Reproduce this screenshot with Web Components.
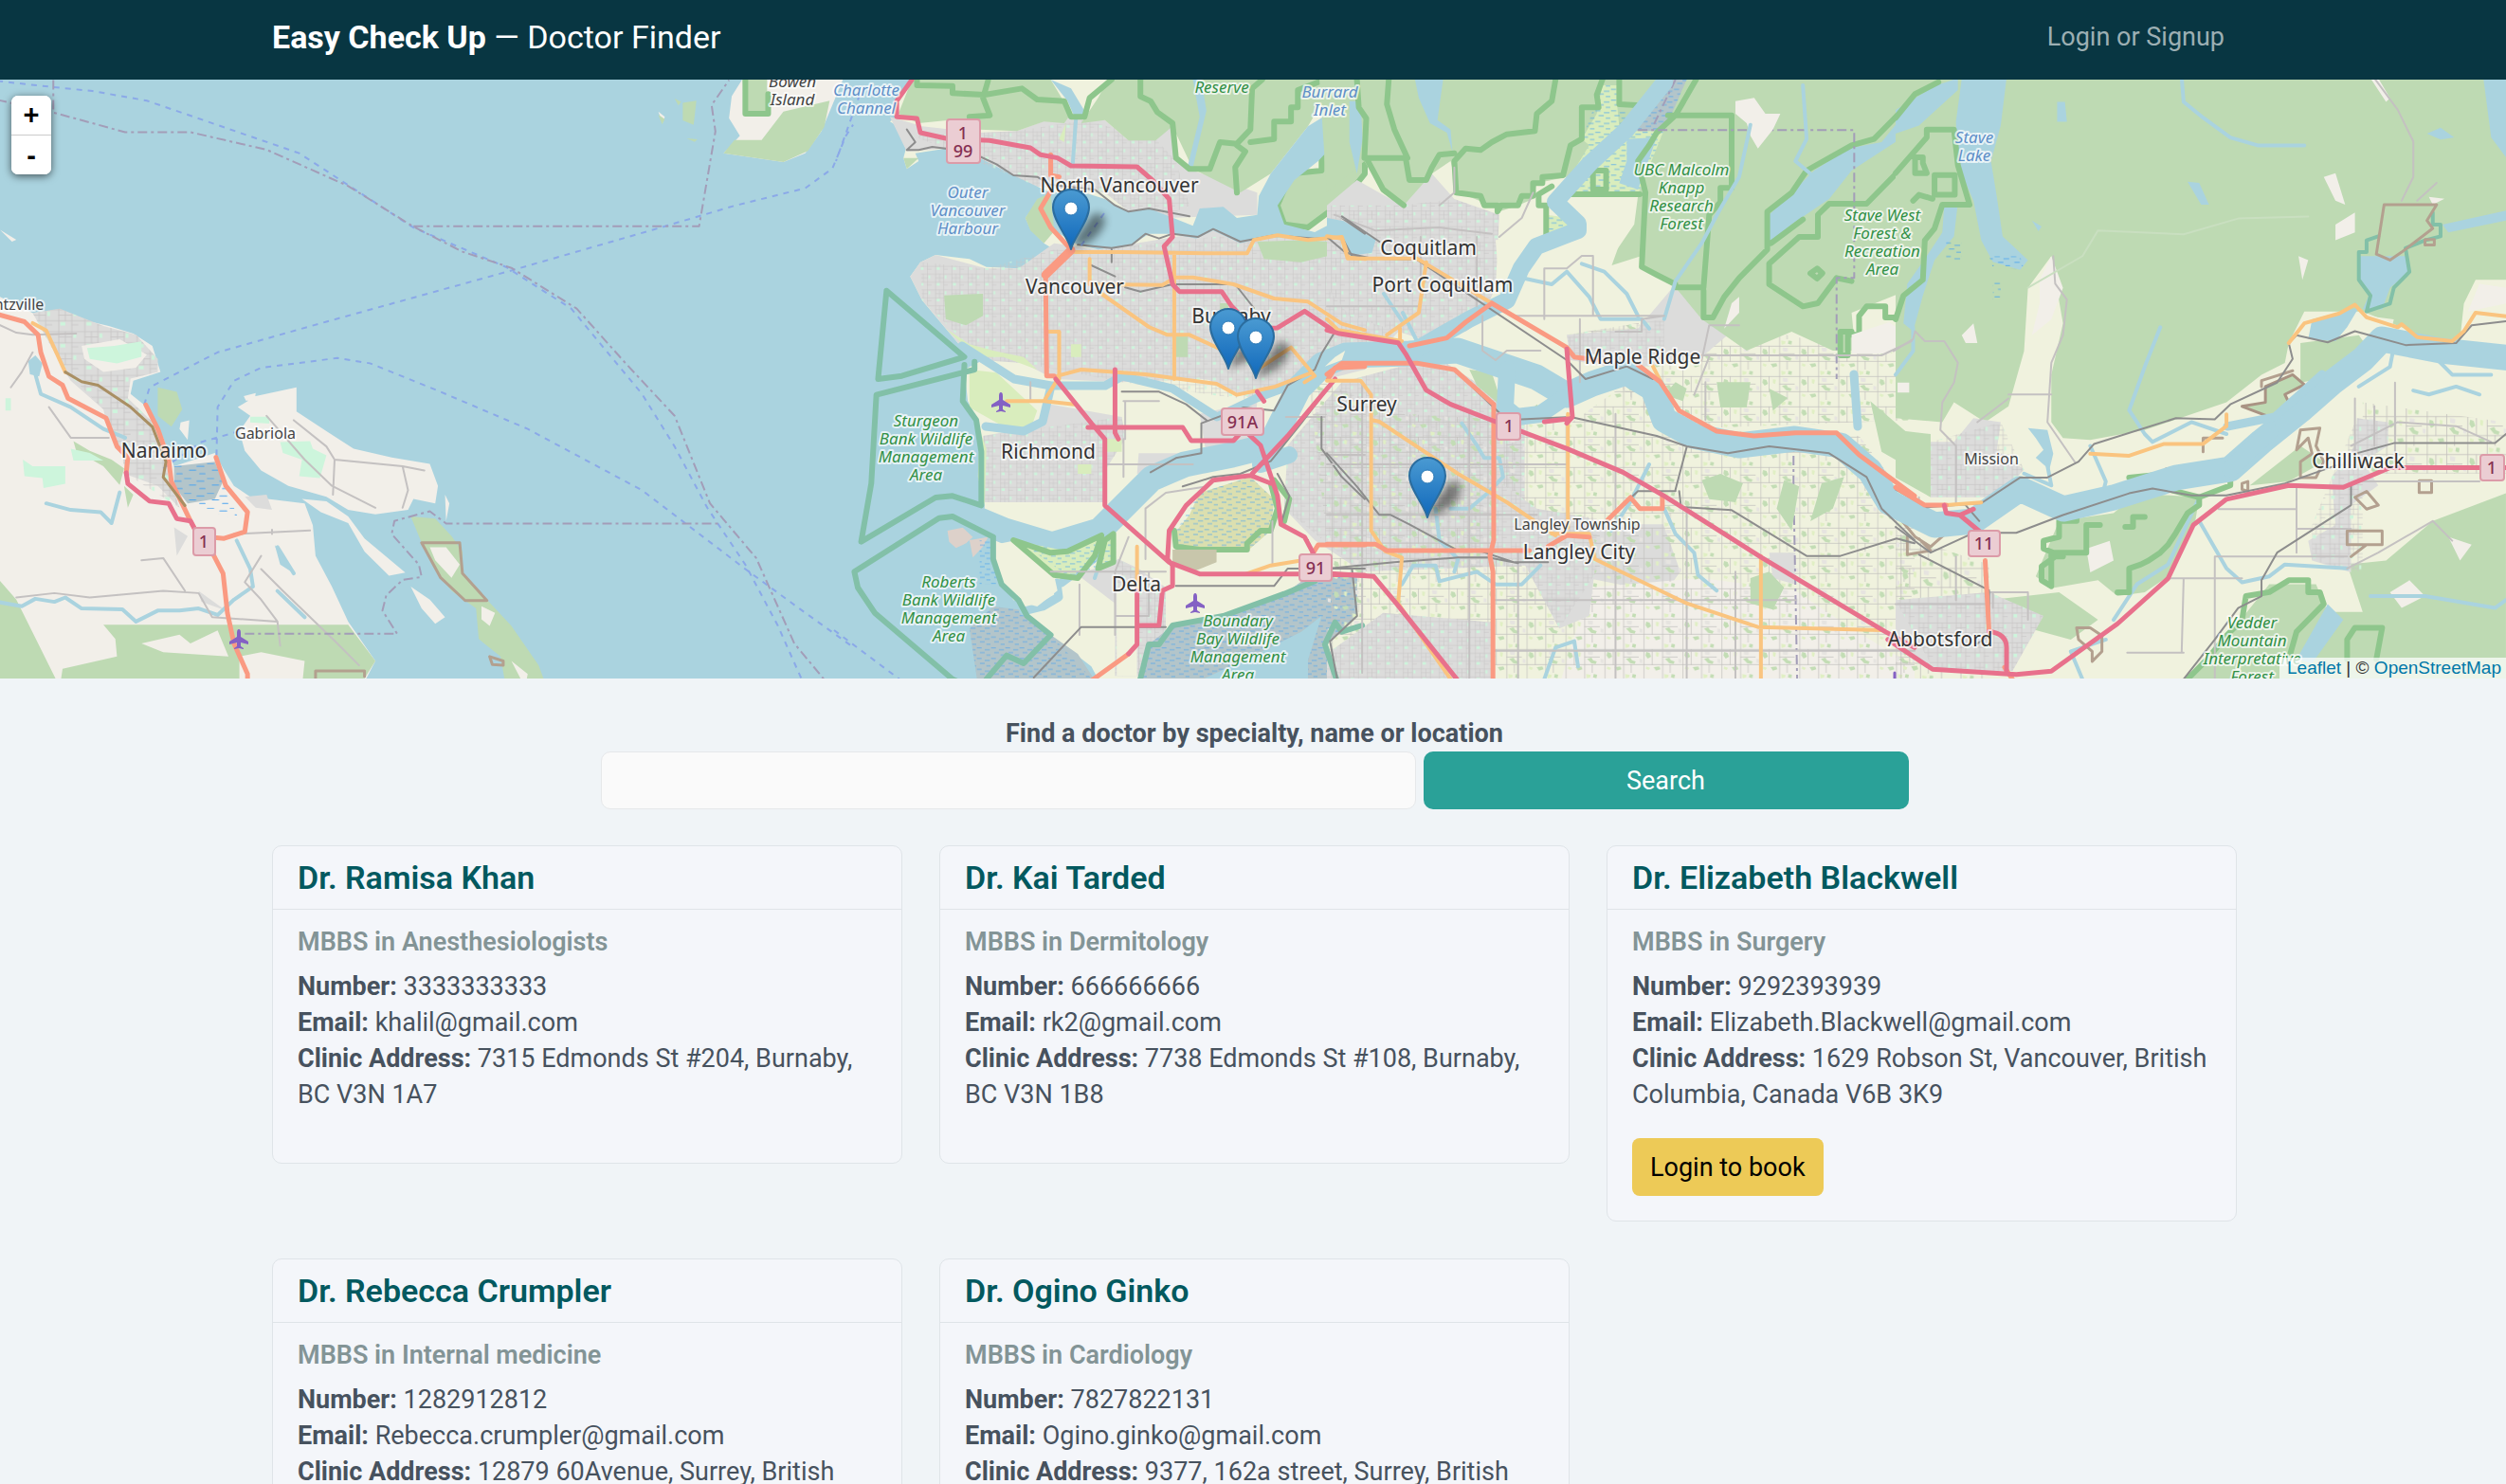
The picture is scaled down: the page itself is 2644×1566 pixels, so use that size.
<!DOCTYPE html>
<html lang="en">
<head>
<meta charset="utf-8">
<title>Easy Check Up — Doctor Finder</title>
<style>
html{overflow:hidden;background:#f0f4f7}
body{margin:0;width:calc(100% + 3px);font-family:Roboto,"Noto Sans",sans-serif;font-size:27px;line-height:38px;color:#47525e}
main{max-width:2073px;margin:0 auto}
</style>
</head>
<body>
<site-header><b slot="brand">Easy Check Up</b><span slot="tagline">— Doctor Finder</span><a slot="account" href="#login">Login or Signup</a></site-header>
<clinic-map></clinic-map>
<main>
<doctor-search></doctor-search>
<card-grid>
<doctor-card name="Dr. Ramisa Khan" specialty="MBBS in Anesthesiologists" number="3333333333" email="khalil@gmail.com">7315 Edmonds St #204, Burnaby, BC V3N 1A7</doctor-card>
<doctor-card name="Dr. Kai Tarded" specialty="MBBS in Dermitology" number="666666666" email="rk2@gmail.com">7738 Edmonds St #108, Burnaby, BC V3N 1B8</doctor-card>
<doctor-card name="Dr. Elizabeth Blackwell" specialty="MBBS in Surgery" number="9292393939" email="Elizabeth.Blackwell@gmail.com" bookable>1629 Robson St, Vancouver, British Columbia, Canada V6B 3K9</doctor-card>
<doctor-card name="Dr. Rebecca Crumpler" specialty="MBBS in Internal medicine" number="1282912812" email="Rebecca.crumpler@gmail.com">12879 60Avenue, Surrey, British</doctor-card>
<doctor-card name="Dr. Ogino Ginko" specialty="MBBS in Cardiology" number="7827822131" email="Ogino.ginko@gmail.com">9377, 162a street, Surrey, British</doctor-card>
</card-grid>
</main>

<template id="t-header">
<style>
:host{display:block;background:#083642;color:#fff}
nav{max-width:2073px;height:78px;padding-bottom:6px;margin:0 auto;display:flex;align-items:center;justify-content:space-between}
.brand{font-size:34px;line-height:40px}
::slotted(b){font-weight:700}
.account{padding-right:13px}
::slotted(a){color:#9cafb3;text-decoration:none}
</style>
<nav><div class="brand"><slot name="brand"></slot> <slot name="tagline"></slot></div><div class="account"><slot name="account"></slot></div></nav>
</template>

<template id="t-search">
<style>
:host{display:block;max-width:1380px;margin:0 auto;padding:39px 0 38px}
form{display:grid;grid-template-columns:860fr 512fr;column-gap:8px}
label{grid-column:1/-1;text-align:center;font-weight:700}
input,button{height:61px;box-sizing:border-box;border-radius:10px;font:inherit;width:100%}
input{border:1px solid #e6e8ea;background:#fafafa;padding:0 20px;outline:0}
button{border:0;background:#2aa198;color:#fff}
</style>
<form><label for="q">Find a doctor by specialty, name or location</label><input id="q" type="text"><button type="button">Search</button></form>
</template>

<template id="t-grid">
<style>:host{display:grid;grid-template-columns:repeat(3,1fr);gap:39px;align-items:start}</style><slot></slot>
</template>

<template id="t-card">
<style>
:host{display:block;border:1px solid #dfe4e8;border-radius:10px;background:#f4f6fa}
h2{margin:0;padding:13px 26px;font-size:34px;line-height:40px;font-weight:600;color:#03595f;border-bottom:1px solid #dfe4e8}
.body{padding:19px 26px 0}
h3{margin:0 0 12px;font-size:27px;line-height:31px;font-weight:600;color:#839496}
p{margin:0 0 27px}
b{font-weight:700}
.foot{padding-bottom:26px}
button{display:block;font:inherit;color:#000;background:#edca57;border:0;border-radius:8px;height:61px;padding:0 19px}
</style>
<h2></h2><div class="body"><h3></h3><p><b>Number:</b> <span class="n"></span><br><b>Email:</b> <span class="e"></span><br><b>Clinic Address:</b> <slot></slot></p><div class="foot"></div></div>
</template>

<template id="t-map">
<style>
:host{display:block;position:relative;height:632px;overflow:hidden;background:#aad3df}
svg{display:block;width:100%;height:100%}
.zoom{position:absolute;left:12px;top:17px;width:42px;border-radius:7px;background:#fff;box-shadow:0 2px 9px #0009;display:flex;flex-direction:column;overflow:hidden}
.zoom button{border:0;background:#fff;height:41px;padding:0;font:700 29px/41px "Liberation Sans",sans-serif;color:#000}
.zoom button+button{border-top:1px solid #ccc;height:42px;line-height:36px}
.credit{position:absolute;right:0;bottom:0;background:#ffffffb8;padding:0 8px;font:19px/22px "Liberation Sans",Arial,sans-serif;color:#333;white-space:nowrap}
.credit a{color:#0078a8;text-decoration:none}
path{vector-effect:non-scaling-stroke;fill:none;stroke-linejoin:round;stroke-linecap:round}
.land{fill:#f2efe9}.farm{fill:#f0f2de}.wood{fill:#bedab3}.town{fill:#dcdcdb}.water{fill:#aad3df}.mud{fill:#b3c5ca}.bog{fill:#dbdfaf}.meadow{fill:#d9edbd}.mint{fill:#cdf5dc}
.grid{fill:url(#streets)}.lots{fill:url(#lots)}.wet{fill:url(#dashes)}
.park{stroke:#8ec68c;stroke-width:6}.sea{stroke:#82c0a8;stroke-width:6}.res{stroke:#b3a08f;stroke-width:3}
.river{stroke:#aad3df}.w26{stroke-width:27}.w18{stroke-width:18}.w9{stroke-width:9}.w4{stroke-width:4}
.m{stroke:#e8718c;stroke-width:5}.t{stroke:#fa9a82;stroke-width:5}.p{stroke:#fac47f;stroke-width:4}.rail{stroke:#8d8d8d;stroke-width:2}.s{stroke:#c4c1c1;stroke-width:2}
.ferry{stroke:#8ba9e8;stroke-width:2;stroke-dasharray:6 6;stroke-linecap:butt}.border{stroke:#a39db8;stroke-width:2;stroke-dasharray:10 4 3 4;stroke-linecap:butt}
text{font-family:"Noto Sans",sans-serif;text-anchor:middle;paint-order:stroke;stroke:#ffffffb0;stroke-width:4px;stroke-linejoin:round}
.city{font-size:21px;fill:#333}.small{font-size:16px;fill:#444}.nat{font-size:17px;font-style:italic;fill:#329046}.sea-name{font-size:17px;font-style:italic;fill:#5f8fc8}.dark{font-size:17px;font-style:italic;fill:#444}
.shield rect{fill:#ebcdd3;stroke:#dc9ba8;stroke-width:2}.shield text{font-size:18px;fill:#863052;stroke:none;font-weight:500}
.plane{fill:#8461c4;stroke:none}
</style>
<svg viewBox="0 84 2647 632" preserveAspectRatio="xMinYMid slice" role="img" aria-label="Map of clinics around Vancouver">
<defs>
<pattern id="streets" width="48" height="50" patternUnits="userSpaceOnUse"><path d="M0,8H48M0,33H48M12,0V50M36,0V50M24,8V33M12,20H36M36,42H48" stroke="#c6c4c4" stroke-width="1.5"/><path d="M15,36h9v8h-9zM39,12h5v10h-5z" class="mint"/></pattern>
<pattern id="lots" width="104" height="96" patternUnits="userSpaceOnUse"><path d="M14,0V96M64,0V96M0,22H104M0,70H104M36,22V70M84,70V96M64,46H104" stroke="#c2c0bc" stroke-width="2"/><path d="M20,30l9,3 4,12 -9,6 -6,-10zM70,52l12,-4 4,8 10,4 -3,8 -12,-3 -4,-5zM40,78l15,-2 3,9 -12,4zM88,4l9,2 -2,11 -9,-3z" fill="#c3ddb5" style="fill:#c3ddb5"/><path d="M68,4l12,3 -2,8 -9,2zM20,76l10,4 -3,7 -8,-3zM46,30l8,2 -2,14 -6,-3z" style="fill:#e0efc4"/><path d="M72,26l14,2 -1,12 -12,-2zM2,52l8,1v12l-8,-1z" style="fill:#e6e4e0"/></pattern>
<pattern id="dashes" width="42" height="34" patternUnits="userSpaceOnUse"><path d="M3,5H15M26,11H39M12,20H24M31,28H41" stroke="#4aa3ef" stroke-width="2"/></pattern>
<linearGradient id="pinfill" x1="0" y1="0" x2="0" y2="1"><stop offset="0" stop-color="#4a9ad2"/><stop offset="1" stop-color="#1068bb"/></linearGradient>
<filter id="soft" x="-50%" y="-50%" width="200%" height="200%"><feGaussianBlur stdDeviation="4"/></filter>
<g id="pin"><path d="M0,0L6,-14 22,-36Q33,-42 36,-30 34,-18 20,-8Z" style="fill:#000" opacity=".45" filter="url(#soft)"/><path d="M0,0C-3,-13 -19,-30 -19,-44A19,19 0 0 1 19,-44C19,-30 3,-13 0,0Z" style="fill:url(#pinfill);stroke:#2b6d9f;stroke-width:2"/><circle cy="-43" r="7" fill="#fff" stroke="#2c79b5"/></g>
<path id="plane" class="plane" d="M0,-10Q2,-10 2,-6V-2L10,3V6L2,4V8L5,10V11L0,10 -5,11V10L-2,8V4L-10,6V3L-2,-2V-6Q-2,-10 0,-10Z"/>
</defs>

<!-- Vancouver Island and the Gulf Islands -->
<g transform="scale(.574 .4619)">
<path class="land" d="M-5,675L20,690 60,715 110,708 150,730 200,745 245,762 280,790 295,850 245,870 240,900 265,925 285,960 300,1000 320,1065 395,1035 410,1070 430,1110 460,1135 560,1150 575,1200 580,1270 610,1340 640,1420 690,1510 665,1570 -5,1570Z"/>
<path class="wood" d="M-5,1320L30,1370 110,1570 -5,1570ZM190,1427H640L690,1510 660,1570H110L115,1528 215,1500 212,1460ZM290,885L325,895 335,935 315,975 290,950ZM135,1008L165,1030 205,1050 228,1070 220,1108 190,1065 140,1030ZM228,1110L245,1130 235,1160Z"/>
<path class="land" d="M440,1500L480,1490 560,1510 555,1570H440ZM260,1470L330,1450 350,1470 400,1440 420,1500 300,1490Z"/>
<path class="town" d="M60,715L110,705 190,745 250,765 290,820 290,850 240,865 235,910 285,970 300,1010 310,1090 330,1160 290,1110 235,1085 225,1040 195,960 190,935 130,870 115,840 85,770ZM450,1135L490,1130 500,1165 470,1160ZM320,1205L345,1225 325,1270ZM365,1350L415,1395 370,1375Z"/>
<path class="grid" d="M60,715L110,705 190,745 250,765 290,820 290,850 240,865 235,910 285,970 310,1090 330,1160 235,1085 190,935 115,840Z"/>
<path class="land" d="M150,790L220,775 270,810 250,840 190,850 155,820Z"/>
<path class="mint" d="M160,795L210,790 260,780 260,815 215,830 165,820ZM42,1050L60,1065 120,1065 120,1105 80,1115 78,1092 45,1088ZM130,1025L165,1035 190,1052 135,1052ZM10,910h10v28h-10z"/>
<path class="land" d="M437,930L470,905 545,885 545,940 600,985 650,1025 720,1045 790,1060 805,1110 800,1150 760,1140 750,1165 690,1175 640,1165 600,1135 530,1110 480,1075 450,1030 440,985 460,950ZM555,1140L600,1145 640,1180 670,1230 745,1308 715,1315 670,1260 640,1195 590,1170ZM755,1340L790,1370 818,1410 800,1425 775,1390ZM448,905L470,898 468,915 452,915ZM332,965L348,960 345,1005 330,980ZM818,1130L826,1150 820,1190ZM0,525L30,548 22,552ZM1210,255l12,12 -4,14z"/>
<path class="mint" d="M515,1010L570,1008 575,1025 600,1040 588,1092 550,1088 555,1050 520,1035ZM460,952L495,952 495,968 460,965Z"/>
<path class="mud" d="M320,1065L395,1055 410,1100 395,1140 345,1150 320,1110Z"/><path class="wet" d="M320,1065L395,1055 410,1100 440,1190 345,1150 320,1110Z"/>
<path class="wood" d="M755,1180L800,1185 830,1225 850,1260 850,1310 895,1370 940,1430 990,1520 1005,1570 930,1570 920,1500 880,1460 875,1390 830,1350 800,1300 775,1240ZM1255,235L1280,230 1275,285 1255,275ZM1240,225l12,8 -5,8zM1210,262l12,10 -5,12zM1262,316l20,2 -5,6z"/>
<path class="res" d="M775,1240H845L850,1310 895,1372H855L810,1320ZM900,1500L925,1510 925,1520 905,1518ZM580,1570V1533H670V1545"/>
<path class="land" d="M790,1250L820,1250 845,1290 830,1320 800,1280ZM885,1385L910,1400 900,1430 885,1415ZM940,1510L970,1540 965,1570Z"/>
<path class="land" d="M1365,180L1550,180 1530,240 1510,300 1480,350 1440,370 1330,350 1360,310 1340,270 1345,220Z"/><path class="wood" d="M1365,180H1410V262H1370ZM1440,255L1525,230 1515,290 1485,345 1440,370 1330,350 1350,320 1400,320Z"/><path class="park" d="M1370,180V260H1412V215"/>
<path class="river w4" d="M-5,1375L40,1385 65,1368 100,1375 120,1365 150,1390 225,1392 250,1420 290,1395 330,1395 365,1390 400,1405 430,1370 465,1340 460,1300 435,1235M65,855L75,900 130,930 190,980 230,1000M85,1150L130,1165 185,1170 205,1195 220,1125M510,1250L540,1310M510,1350L560,1410"/><path class="water" d="M52,825L65,812 78,830 72,860 55,855ZM505,1245L530,1290 540,1310 515,1290Z"/>
<path class="s" d="M-5,740L30,760 60,765 140,762M20,885L40,850 60,805M90,930L130,1000 200,1000M30,1365L100,1355 165,1365 300,1350 365,1355 390,1410 510,1420M480,1270L450,1330 480,1370 510,1420 515,1475M500,1220V1210M430,1220L570,1212M540,960L600,1020 615,1050 740,1065 780,1075M615,1050L612,1130M740,1065L750,1120 740,1160M490,950L560,1050 610,1110 690,1160M260,1280L300,1275 340,1350M480,1300L520,1350 620,1470 660,1520"/>
<path class="ferry" d="M-5,185L90,198 170,208 270,230 550,350 760,520 930,610 1050,705 1180,900 1240,1020 1300,1160 1370,1290 1430,1430 1480,1570M265,925L275,885 400,805 600,735 940,618 1200,525 1350,470 1480,430 1530,385 1555,310 1568,285M398,1040L400,930 430,870 480,840 620,818 680,830 800,890 970,980 1180,1120 1370,1300 1480,1400 1570,1480M300,1070L370,1010 440,985"/>
<path class="border" d="M-5,228L30,238M98,183V257L230,302H350L490,342 640,425 760,518 850,575 940,612 1060,705 1150,830 1240,950 1305,1150 1390,1275 1460,1470 1540,1590M760,517H1285L1315,300 1308,240 1340,183M450,1448H730L703,1395 710,1360 740,1325 775,1318 770,1290 720,1220 725,1190 790,1168 820,1196H1325"/>
<path class="p" d="M60,738L85,755 120,850"/><path class="t" d="M-5,718L45,735 70,765 75,805 90,860 115,880 125,910 195,955 215,1020 235,1045 232,1080M268,925L290,980 310,1050 315,1100 350,1190 365,1225 412,1230 450,1215 455,1170 415,1110 397,1045M385,1250L410,1310 418,1400 430,1470 455,1540 455,1570"/>
<path class="m" d="M232,1080L235,1105 275,1145 310,1150 325,1185 350,1190 365,1225"/><path d="M120,850L150,872 180,880 240,930 280,975 305,1055 300,1090 340,1155" stroke="#a98f63" stroke-width="3"/>
</g>

<!-- Mainland base and urban areas -->
<g transform="translate(880 70) scale(.35714 .33333)">
<path class="farm" d="M230,42L190,100 185,160 165,175 205,200 215,250 205,290 215,325 250,300 240,275 330,260 430,290 480,310 530,345 600,350 600,380 640,400 600,430 565,480 580,515 620,560 650,580 625,620 545,640 450,635 400,610 300,597 255,620 225,665 260,740 330,830 385,900 440,930 385,960 395,1060 420,1110 440,1210 445,1400 320,1372 360,1385 430,1410 470,1510 470,1560 495,1640 545,1690 570,1740 640,1800 700,1850 760,1900 790,1960H5000V42Z"/>
<path class="town" d="M165,160L260,190 430,210 540,205 680,150 740,170 800,170 870,235 1000,190 1010,300 1060,330 1250,400 1250,470 990,480 870,460 800,400 600,380 530,345 430,290 330,260 215,270ZM225,665L255,620 300,597 450,640 545,640 650,560 780,580 1120,520 1500,540 1568,480 1780,490 1880,720 1700,800 1568,960 1420,1000 1250,1060 1100,990 850,1000 650,990 560,940 440,930 385,900 260,740Z"/>
<path class="grid" d="M230,220L540,205 740,170 950,230 1010,300 1050,440 990,470 870,460 800,400 600,380 330,260ZM260,740L255,620 450,640 650,580 780,580 1120,540 1568,520 1780,490 1820,750 1568,900 1250,1060 850,1000 560,940 440,930Z"/>
<path class="town" d="M440,1170L600,1140 640,1070 850,1110 860,1180 800,1280V1380H445ZM900,1225H1060L1100,1280 1000,1290 940,1280 895,1290ZM1080,1100L1250,1060 1240,1190 1100,1230ZM840,1560L900,1590 980,1650V1930H830V1700L720,1610Z"/><path class="grid" d="M440,1170L850,1110 860,1180 800,1280V1380H445ZM840,1560L980,1650V1930H830Z"/>
<path class="farm" d="M850,1040L960,1030 1040,1070 1085,1130V1220H870ZM835,1660H895V1930H835Z"/>
<path class="town" d="M1340,1200L1500,1000 1780,920 2040,1100V1450L2450,1450 2500,1600 2380,1780 2320,1640 2040,1580 1560,1600 1420,1500 1330,1400Z"/><path class="grid" d="M1330,1400L1340,1200 1500,1000 1780,920 2040,1100V1580L1560,1600Z"/>
<path class="wood" d="M230,42H640L700,150 680,180 620,175 540,205 430,200 340,170 250,180 190,150ZM730,180L780,100 810,42H1480L1400,190 1290,340 1200,400 1060,325 1000,190 950,235 870,235 800,170ZM1250,555L1400,550 1510,560 1500,590 1380,620 1270,610ZM325,725L440,720V790L390,820 330,800ZM565,480L600,420 640,400 660,510 620,560 580,520ZM205,290L250,290 215,325ZM1010,850h35v70h-35zM1140,750h25v25h-25z"/>
<path class="wood park" d="M1450,42L1530,42 1568,60V340L1500,430 1400,510 1330,500 1310,440 1350,340 1440,330V240L1460,180Z"/>
<path class="water" d="M640,400L740,400 800,420 870,460 930,450 990,475 1060,505 1080,450 1150,445 1190,480 1250,470 1255,410 1290,340 1400,190 1460,150 1540,42H1568L1500,220 1430,300 1360,360 1310,440 1330,500 1420,525 1500,480 1568,490 1670,520 1740,560 1650,600 1550,560 1520,540 1430,550 1350,540 1260,545 1200,560 1120,520 1070,545 1000,530 930,530 880,565 780,580 720,565 650,520ZM640,42L700,70 745,150 735,165 710,160 690,110ZM1060,42H1085L1100,140 1060,320 1045,315 1080,160Z"/>
<path class="river w4" d="M715,160L705,310M1540,42L1568,160"/>
<path class="park" d="M245,42V60L350,62V85L445,90 555,70 600,105 680,110 700,160H740L755,100 820,42M455,45L440,100 460,155 400,160M905,42V95L935,110 955,145 1000,180 1010,290 1050,325 1110,325 1140,240 1190,245 1230,200 1235,70 1265,42M1190,250L1215,270 1185,320 1190,400M1230,240L1300,230V175H1350V130H1370V75L1450,42"/>
<path class="meadow" d="M400,960L480,970 600,1090 580,1150 500,1140 400,1080ZM430,1150L450,1210 445,1390 425,1300ZM330,830L400,880 470,900 560,920 600,960 500,920 420,920ZM665,230L685,180 680,240Z"/>
<path class="farm" d="M565,1400L745,1385V1490L600,1510Z"/>
<path class="meadow" d="M720,1260h40v30h-40zM800,1180h50v40h-50zM700,880h30v40h-30z"/>
<path class="bog" d="M1080,1350L1230,1300 1300,1370 1290,1470 1220,1535H1010L1005,1480 1050,1420Z"/><path class="wet" d="M1080,1350L1230,1300 1300,1370 1290,1470 1220,1535H1010L1005,1480Z"/>
<path class="park" d="M1005,1470L1010,1520 1080,1530 1220,1530V1510L1260,1470H1290L1310,1400 1290,1320M1300,1310L1345,1370 1330,1440"/>
<path d="M1000,1530H1130V1570L1060,1600 1000,1575Z" style="fill:#c8c6ab"/>
<path d="M335,1470L380,1460 410,1490 390,1510 360,1525 340,1505ZM400,1500L455,1490 440,1520 410,1555Z" style="fill:#ddd1ca"/>
<path class="mud" d="M400,1780L470,1710 545,1720 570,1745 640,1800 720,1860 780,1960H425ZM900,1960L930,1830 1000,1770 1150,1740 1330,1670 1420,1600 1545,1610V1740L1450,1830 1490,1960Z"/><path class="wet" d="M400,1780L470,1710 545,1720 640,1800 780,1960H425ZM430,1500L470,1500 490,1640 430,1640ZM900,1960L930,1830 1000,1770 1150,1740 1330,1670 1420,1600 1545,1610V1740L1450,1830 1490,1960Z"/>
<path class="water" d="M1050,1960L1250,1860 1380,1790 1440,1740 1400,1880 1400,1960Z"/>
</g>

<!-- Valley forests -->
<g transform="translate(1400 70) scale(.3954 .33333)">
<path class="land" d="M700,1650L1000,1620 1250,1660 1400,1780 1568,1900V1960H620Z"/>
<path class="lots" d="M-50,980L200,1100 650,1130 850,960 1000,1150 1420,1170 1568,1400 1568,1960H150L0,1840 0,1500Z"/><path class="lots" d="M640,850L1000,780 1150,830 1420,900 1568,850V1120L900,1150Z"/>
<path class="town" d="M340,420L460,470 450,700 400,830 270,870 60,790 0,700V440L80,360 200,440 280,340ZM640,850L830,830 930,690 1000,800 1100,820 1000,920 800,960 650,930ZM440,1300L560,1400 700,1430 720,1540 700,1740 620,1780 520,1560 440,1560ZM1180,1540H1250V1640L1190,1620Z"/><path class="grid" d="M340,420L460,470 450,700 400,830 270,870 60,790 0,700V440L200,440ZM640,850L900,800 900,930 650,930ZM440,1300L560,1400 720,1430V1600L620,1780 520,1560 440,1560Z"/><path class="town" d="M0,1940V1860L150,1730 440,1760V1950H0Z"/><path class="grid" d="M0,1940V1860L150,1730 440,1760V1950H0Z"/>
<path class="wood" d="M-20,42H1700V700H1568L1400,780 1410,900 1350,900 1240,840 1120,900 1000,800 930,700 840,640V600L760,630 830,400 630,400 640,350 560,370 550,420 510,440 460,460 440,440 350,400 330,300 280,340 205,440 150,400 100,300 0,400Z"/>
<path class="farm" d="M450,550L590,540 620,410H830L820,500 740,640 700,700 460,690ZM370,840L440,780 620,900 560,940 420,930Z"/>
<path class="meadow" d="M735,60H775V130L780,190 900,200 830,405H620L700,250 680,230 720,150ZM585,470L650,480 660,520 585,545Z"/><path class="wet" d="M735,60H775V130L900,200 830,405H620L700,250 680,230ZM585,470L650,480 660,520 585,545Z"/>
<path class="mud" d="M890,42H960L900,205H820Z"/><path class="wet" d="M890,42H960L900,205H820Z"/>
<path class="water" d="M1568,110L1480,240 1390,260 1300,330 1180,470 1175,570 1240,500 1340,420 1400,330 1568,200ZM235,42H310L295,170 330,200 335,270 320,210 275,180 245,100ZM60,110H90L95,230 80,340 60,240ZM0,480L45,490 130,550 120,590 60,600 30,540 0,545ZM800,230L880,225 830,390 780,370 800,300Z"/>
<path class="park" d="M80,42L85,130 105,165 100,290H210L220,360H265L280,320 300,280 340,275M165,42L160,120 180,200 215,290M610,42L600,110 560,150 555,205 480,215 440,240 410,265 370,260 340,300 345,400 410,410 420,440H455V460L465,440H510L520,410H550V370H575V350L630,345 650,250 680,230V130H725L720,90 735,42M780,42V120L860,125 890,42M105,290L150,390 205,440M910,155H1080V385H1050V430L1020,470 1005,700H930L930,690 880,660 840,635 850,400 830,300 860,250 880,210 930,155 985,42M620,405H835M600,380L565,405V440L585,440V545L660,530M1005,710V795H1030L1060,730 1100,670 1175,580 1175,460 1240,400 1280,330 1400,250 1460,230 1568,100M1185,560L1270,485M1568,280L1440,435H1340L1310,470V540H1260L1180,625V690L1270,760 1310,750 1360,670 1400,680M1290,655L1308,640 1322,655 1308,672ZM1520,795H1490V760H1440L1420,790V850H1390V915H1370V840L1400,840M710,330h35v60h-35z"/>
<path class="border" d="M830,202H1407V670H1360V990M930,42L870,190M1245,1170V1330L1255,1960"/>
<path class="land" d="M1090,110L1140,100 1170,150 1210,150 1190,200 1150,260 1130,220 1120,180 1090,150ZM1400,850L1500,810 1560,860 1500,910 1400,910ZM1080,750L1100,730 1100,780 1060,830Z"/>
<path class="river w4" d="M1130,185L1100,350 1050,450 1000,560 930,680 900,800M520,670L600,690 640,650 700,730 730,800 840,800 860,830M680,625L740,650 800,720 830,790M1270,60L1280,230 1250,300 1290,340M360,1130L400,1200 420,1240H460L470,1300 430,1350 380,1400 330,1400M290,1400L300,1500 350,1560 340,1600M200,1640L230,1580 290,1580 300,1630 400,1600 450,1640 520,1640 570,1580M900,1400L930,1480 980,1540 990,1610 1040,1660M580,1940L610,1840 660,1820 670,1900"/>
<path class="wood" d="M480,1160L520,1090 560,1100 600,1120 560,1070ZM1130,1620L1180,1600 1220,1650 1190,1720 1130,1700ZM1220,1310L1260,1330 1240,1470 1200,1400ZM380,960L440,970 470,1080 400,1010ZM880,1080L990,1180 940,1190 880,1140ZM1040,1000L1130,1000 1120,1080 1050,1080ZM1450,1060L1568,1180V1280L1480,1220ZM1000,1310L1050,1290 1110,1320 1090,1380 1020,1370ZM1320,1320L1380,1300 1350,1400 1290,1440ZM900,1040L930,1000 960,1020 950,1060ZM1180,1020L1230,1050 1190,1090Z"/>
</g>

<!-- Stave Lake, Mission and Chilliwack -->
<g transform="translate(2000 70) scale(.41068 .4172)">
<path class="lots" d="M0,1180L240,1260 240,1560H0ZM1200,850L1568,900V1030H1200Z"/>
<path class="wood" d="M0,30H1700V540H1490L1460,600 1450,690 1380,700 1300,660 1200,620 1050,620 1010,700 1000,750 940,780 850,850 640,920 500,945 430,940 400,900 400,780 430,650 400,480 340,560 330,720 290,860 230,900 150,850 120,900 0,890Z"/>
<path class="wood" d="M0,920L90,930 90,1090 0,1040ZM420,1150L560,1130 620,1080 780,1090 770,1150 700,1290 640,1330 570,1340 520,1300 400,1320 360,1290ZM1160,1260L1260,1250 1380,1150 1568,1080V1500L1620,1560H960L740,1560 870,1420 960,1310 1080,1310 1110,1380 1200,1380ZM910,1060L1040,960 1100,1000 1010,1050ZM240,1350L420,1330 520,1400 450,1450 300,1410ZM1040,700L1190,680 1220,720 1150,780 1040,800Z"/>
<path class="wood park" d="M950,810L1020,780 1050,805 1000,830 1020,870 970,890 890,860 950,850Z" style="stroke:#a99383;stroke-width:3"/>
<path class="farm" d="M1155,655L1200,630 1280,640 1270,680 1190,670ZM300,1250L360,1220 360,1330 300,1320Z"/>
<path class="town" d="M90,950L150,950 200,890 270,900 260,970 330,1020 260,1090 90,1090ZM1185,890L1265,900V960L1200,1000 1240,1060 1170,1110V1280L1070,1250 1060,1200 1130,1160 1120,1040 1180,960ZM0,1350L240,1330 380,1390 300,1530H100L0,1450Z"/><path class="grid" d="M90,950L270,900 330,1020 260,1090H90ZM1185,890L1265,900V960L1200,1000V1280L1070,1250V1160L1120,1040ZM0,1350L240,1330 380,1390 300,1530H100Z"/>
<path class="land" d="M170,680L200,650 210,700 180,700ZM370,540L400,480 430,560 400,640 350,680 370,600ZM1100,280L1130,270 1155,350 1130,340ZM1220,30H1240L1270,80 1260,90ZM1130,400L1180,370 1180,420 1130,440ZM5,800h30v25H5zM1500,550L1568,560V600L1470,620ZM1270,1330L1320,1300 1360,1340 1300,1370ZM1420,1190L1480,1210 1450,1250ZM1035,480L1060,490 1045,540ZM490,1220L550,1200 560,1250 500,1280ZM1370,330L1410,335 1380,350Z"/>
<path class="water" d="M170,30H285L270,150 245,240 260,330 275,430 340,490 320,515 250,495 220,440 200,340 160,250 155,140ZM125,350L160,345 150,430 100,490 70,580 45,670 20,650 30,550 80,480 120,420ZM415,90H435L440,140 415,140ZM750,292L780,295 805,350 785,350ZM1510,30H1568V230L1530,180ZM1190,480L1310,480 1320,520 1270,560 1250,615H1200L1220,570 1190,540ZM1070,640L1190,610 1160,660 1130,695 1060,690ZM1405,400L1568,365V390L1420,420ZM340,915L390,920 405,980 395,1020 360,990 380,970 360,940ZM0,110L100,50 160,30V60L60,150 0,170ZM1110,1360L1150,1400 1070,1510 1030,1500ZM350,390l25,15 -8,12zM1365,170L1400,155 1435,180 1400,185Z"/>
<path class="river w4" d="M735,30L740,90 790,130 860,180 930,200 1050,200M680,660L640,760 600,870 640,930 660,950 760,900 850,930M500,960L540,1050 530,1090M780,1150L850,1270 890,1305 960,1290 1000,1260 1160,1270M1220,1340L1360,1340 1540,1370 1568,1350M780,1090L700,1260 620,1310 560,1400M540,1450L450,1480 480,1550M1280,710L1270,760 1190,810M1330,820L1370,830 1440,810 1500,830M1390,740L1430,780 1530,780M390,1010L400,1060 330,1030M0,780L45,720V660"/>
<path class="wet" d="M240,480L320,480 330,515 250,510ZM130,440H170V490H130ZM250,540h20v50h-20z"/>
<path class="park" d="M0,130L50,70 110,40M0,270L80,180V160H150L160,250 190,350 120,350 100,410 75,440 70,540 20,580 0,640M100,275h52v50h-52zM50,230L70,230V245L80,270H50ZM45,340L60,325 95,335M420,1150H465V1130M420,1150V1190L380,1200V1220L430,1240 410,1240 375,1265V1300L400,1315V1230H490V1160H525M780,1090V1110L750,1130 720,1180 700,1210 680,1230 650,1250 630,1260 600,1270V1330H570M780,1090L700,1070 620,1080 560,1100 500,1115M640,1140H610V1165H590M860,1020V1060L780,1090M740,1560L800,1500 850,1440 890,1400 900,1340 960,1330 1010,1300H1060V1330H1090L1100,1360 1030,1430 1010,1500M1160,1500V1450L1180,1420H1250L1235,1500M500,1115L510,1090 600,1070M600,1040L850,1015"/>
<path class="sea" d="M1240,430L1210,440V470H1190V540L1220,580 1210,620 1270,600 1280,560 1320,520 1310,460 1360,440 1400,430 1400,400H1380V370" style="stroke-width:4"/>
<path class="res" d="M1255,350H1390L1365,390 1380,410 1300,470 1270,490 1235,475ZM1360,438h24v14h-24zM0,1130L80,1130 130,1180 90,1215 50,1190ZM30,1190V1235L90,1225 60,1195M465,1420L500,1420 530,1440V1480L505,1505V1480L470,1450ZM1345,1048h32v30h-32zM1160,1175H1250V1210H1160ZM1170,1240L1210,1210M1030,970L1040,920 1090,915 1080,960 1100,1000 1080,1040 1040,1040V1000L1070,980 1060,940ZM695,1018h30v18h-30zM875,1000L885,975 900,990 885,1005ZM890,1055L905,1050 905,1075 890,1070ZM1180,1090L1210,1075 1240,1110 1210,1120ZM790,975V940H840M940,810V795L1020,770"/>
<path class="s" d="M-5,720L45,690 50,670 75,695 125,695 160,750 150,800 120,850 115,920 155,960V1105M405,480L410,550 440,590 430,680 400,750 390,900 460,1000M290,830H400M210,900L290,840M1230,30L1290,110 1330,190V280L1300,340M1390,295L1340,340M1030,1060V1230M830,1120H1030M1030,1170H1170M820,1240H1160M820,1240V1560M700,1295H890M1180,1050H1500M1170,960L1290,900 1440,910 1530,950M740,1295L735,1480M595,1483H740M1230,860V960M1283,800V1000M1180,840V1000M1160,1270L1240,1230 1380,1150 1430,1200M0,1360H240V1330H340V1400M250,1330V1370M60,1120V1090M155,1240V1350"/>
<path d="M340,560L480,480 520,415 740,425 880,385 1060,380" stroke="#c9dfc0" stroke-width="2"/>
</g>

<!-- Fraser, Pitt and their arms -->
<path class="river w26" d="M1000,535L1060,560 1110,575 1160,560 1190,530 1215,505 1250,490 1300,480 1340,470 1355,440 1370,410 1395,385 1420,375 1487,373 1538,370 1621,398 1653,417 1680,405 1716,393 1744,410 1756,443 1787,460 1835,470 1894,463 1942,470 1973,497 1993,530 2041,554 2082,550 2131,516 2177,537 2230,525 2296,504 2353,495 2386,466 2427,433 2460,404 2493,379 2513,358 2575,370 2660,379"/>
<path class="river w18" d="M1487,373L1550,337 1590,317 1605,283 1621,260 1665,243 1665,236 1641,213 1677,173 1716,137 1756,87M1590,390L1588,430 1600,440 1625,437 1650,420M2353,495L2395,455M1360,480L1330,490"/>
<path class="river w9" d="M1015,365L1070,400 1109,407 1166,407 1184,397 1237,410 1284,440 1326,420 1380,400M1109,407L1100,445 1080,455 1040,450M1115,615L1117,630 1100,640 1080,645M1120,615L1160,585M1050,580L1110,600M1956,395L1960,450M2350,450L2400,440 2450,395"/>
<path class="river w4" d="M1480,330L1500,370M1460,310L1480,340M1075,570L1105,610M1155,610L1165,580M1700,560L1720,530 1740,490"/>
<g transform="translate(880 70) scale(.35714 .33333)">
<path class="farm" d="M1480,920L1510,900 1500,930 1450,950ZM470,1515L540,1500 650,1610 660,1660 600,1710 530,1690 490,1620Z"/><path class="meadow" d="M530,1500L690,1535 790,1490 760,1560 700,1620 640,1600ZM790,1500L820,1490 830,1560 790,1590Z"/><path class="wet" d="M550,1505L690,1535 820,1490 830,1560 700,1620Z"/>
<path class="park" d="M530,1500L640,1540 690,1535 790,1485 770,1550 720,1620 650,1610ZM800,1500L825,1480V1570L780,1590Z"/>
<path class="sea" d="M155,710L385,920 200,980 130,990ZM415,935V960L125,1040 110,1320 80,1505 300,1365 350,1360 435,1390V1220L420,1120 380,1060 385,945M470,1490L350,1425 310,1430 60,1600 70,1650 120,1730 350,1940 390,1960M470,1490V1560L495,1640 545,1690 570,1740 640,1800 560,1890 510,1865 450,1940M900,1960L930,1830 960,1830 1000,1770 1150,1740 1330,1670 1420,1630M1490,1960L1450,1830 1480,1760 1500,1790 1560,1770"/>
<path class="s" d="M725,1640V1800M830,1800V1600L870,1490M920,1560V1400L980,1350 1100,1330M1295,1440V1580M1560,1010V1920M1440,1230H1568M855,1060H960M580,1060V1000M1335,1110H1450M860,1060V1180M640,1600H980M830,1740H930V1600M800,1260H1060M855,1180V1300"/>
<path class="rail" d="M215,200L240,240 215,265 250,265 290,255 400,270 480,310 530,345 600,350 640,375 770,390 830,440 870,460 930,450 1050,475M720,565L820,575 880,565 920,530 960,545 1000,530 1075,540 1120,515 1200,555 1300,535 1420,545 1500,540 1530,600 1568,605M1500,480L1568,530M1000,690H1185L1240,765M860,700L905,713 1000,690M820,580V620M760,630L830,665M935,1285L1010,1240 1085,1225V1130L1210,1080 1300,1090 1340,1010 1420,960 1440,910 1480,840M850,1030L960,1030 1040,1070 1100,1120M1030,1330L1120,1300 1200,1290 1290,1250 1380,1130 1480,990M1440,1110L1440,1210 1500,1300 1568,1370M1010,1645H1300L1340,1590H1568M590,1935L730,1775H980M1310,1290L1345,1360 1320,1450 1400,1500M1530,1590L1545,1740 1465,1820 1490,1960"/>
<path class="p" d="M700,588H850L1110,592H1220L1240,550 1310,535 1400,550 1500,540 1520,605 1570,610M755,610V690L970,692 1010,668H1060L1180,690 1300,735 1400,745 1500,815 1568,835M1005,590V990M790,720L930,825 985,850 1050,850 1150,900M1250,960L1350,890 1420,980 1390,1000M660,980L730,960 920,975 1130,1005 1190,1040 1300,1015 1410,970M665,990V840H630M655,1000L620,1060 510,1060M620,1060L710,1070M895,1520V1650M1215,1608L1290,1580 1375,1565"/>
<path class="t" d="M640,280V345L665,350M640,395L610,450 640,510 700,580M625,660L628,980H650M1410,1550L1430,1515H1568M870,1860L760,1945M1460,990L1480,955 1568,950"/><path class="t" d="M625,660L700,582" style="stroke-width:9"/>
<path class="m" d="M230,42L185,110V160L245,165 255,210 330,228 460,235 580,258 610,280 660,290 700,315 895,318 940,360 990,420 1000,540 975,570 1000,690 1020,713H1145L1175,760 1240,830 1310,828 1390,775 1480,840 1568,852M655,990L760,1130 800,1180V1390L990,1570 1080,1607H1370L1568,1611M750,1143H1030L1055,1185H1180L1210,1150 1260,1200 1310,1360 1320,1450 1390,1490 1415,1540M830,960V1160L840,1180M1000,1580V1645L970,1660 960,1770H900M895,1660V1830L870,1860M1250,1030L1270,1060M1000,1580L985,1560 990,1470 1040,1390 1120,1310 1230,1295 1290,1320M1235,1290L1340,1170 1480,990"/>
</g>
<g transform="translate(1400 70) scale(.3954 .33333)">
<path class="s" d="M580,640V800M580,640H640L680,600H710V790M500,790H900M415,790V900L450,930 480,900 570,900M675,800V1000M770,840H840V800L900,790M900,915H1480L1560,870M1010,1000V1120M1100,820L1020,820 1000,930M1020,920L980,1040M340,320V400L300,440M460,540L520,480 550,400M20,470L130,520 300,510 440,530M0,760H250M250,540V700M400,540V760M440,1690H1250M510,1530V1950M770,1100V1950M960,1400V1950M1090,1600V1950M440,1850H1568M0,1420H560M0,1260H640M380,1090V1950"/>
<path class="rail" d="M40,475L140,555M0,540L50,590 120,608 240,612 640,930 690,990 800,950 870,990M340,960L480,1120 650,1110 880,1170 960,1203 1070,1225 1180,1203 1340,1225 1440,1300 1480,1400 1568,1500M0,1225L80,1330 140,1420H170L220,1450 345,1530 410,1535 500,1570H590M0,1590L180,1570 350,1555H430L510,1573M960,1205L930,1340 930,1345H830L750,1435M940,1345L945,1395 1080,1405 1280,1550 1370,1550 1520,1495 1568,1510"/>
<path class="p" d="M0,538L40,545 55,608H240L440,750M265,620L245,780 160,850M195,830V880M0,800L30,835 200,870M0,995H90L118,1040V1470L155,1535 200,1555 190,1700 330,1940M120,1120L140,1125 350,1290 480,1380 610,1485M643,1100V1460M600,1480L700,1480 715,1560 960,1700 1150,1775 1480,1785M1158,1550V1950M870,950L900,1020"/>
<path class="t" d="M440,750L640,890 660,920 720,930M440,750L370,810 320,860 220,885M0,975L40,940 240,940 340,960 445,1070V1500L435,1550 443,1600V1950M0,1513H130L160,1533H540M590,1520L640,1485 700,1490M810,1365L835,1400H895V1360M830,945L890,1000 940,1090 1040,1155 1140,1170 1250,1160H1360L1420,1230 1568,1360M750,1435L810,1365"/>
<path class="m" d="M0,835L30,845 190,875 210,910 265,1025 330,1070 450,1125 640,1210 790,1285 900,1360 1160,1555 1490,1790 1568,1840M640,895L655,1110 640,1130M580,1125L650,1115M0,1605L125,1615 185,1700 350,1945"/>
</g>
<g transform="translate(2000 70) scale(.41068 .4172)">
<path class="rail" d="M0,1070L80,1115 220,1105 320,1040H390L470,1000 510,955 720,890 820,893 860,855 980,800 1020,740 1010,700 1030,680 1110,698 1180,670 1310,705 1440,700 1480,655 1568,645M0,1165L90,1230 200,1180H310L430,1135 600,1080 660,1068 760,1085H850L1000,1055 1130,1010M1180,980L1280,953H1540L1568,930M1170,1060V1110L980,1230 940,1300V1340L880,1370 820,1450 740,1550M60,1235L240,1325V1440L210,1460M180,1110L215,1150"/>
<path class="p" d="M130,1110L220,1103M500,980L600,985 690,955H790L850,910V880M1010,700L1050,650 1140,625 1180,603 1210,635 1290,660 1300,652 1340,685 1430,695 1460,670 1490,623 1568,632"/>
<path class="t" d="M0,1065L75,1110H130M230,1250L240,1430M280,1520L300,1550"/>
<path class="m" d="M-20,1450L95,1525 310,1538 400,1530 570,1410 700,1295 765,1160 850,1095 1010,1060 1150,1065 1270,1015H1580M240,1430Q285,1435 285,1470V1530M125,1110L130,1130 165,1135 220,1180M165,1135L200,1120"/>
</g>
<path class="ferry" d="M907,100L882,170M1165,225L1140,260M880,665L960,725"/>

<g id="names"></g>
<use href="#plane" x="1056" y="424"/><use href="#plane" x="1261" y="636"/><use href="#plane" x="252" y="674"/><path d="M1999,716V710" stroke="#8461c4" stroke-width="3"/>
<g class="shield"><rect x="999" y="126" width="35" height="46" rx="3"/><text x="1016" y="147">1</text><text x="1016" y="166">99</text><rect x="204" y="557" width="23" height="29" rx="3"/><text x="215" y="578">1</text><rect x="1289" y="431" width="44" height="28" rx="3"/><text x="1311" y="452">91A</text><rect x="1371" y="585" width="34" height="28" rx="3"/><text x="1388" y="606">91</text><rect x="1579" y="436" width="25" height="28" rx="3"/><text x="1592" y="456">1</text><rect x="2077" y="560" width="33" height="27" rx="3"/><text x="2093" y="580">11</text><rect x="2617" y="480" width="25" height="27" rx="3"/><text x="2629" y="500">1</text></g>
<use href="#pin" x="1130" y="263"/><use href="#pin" x="1296" y="389"/><use href="#pin" x="1325" y="399"/><use href="#pin" x="1506" y="546"/>
</svg>
<div class="zoom"><button type="button" aria-label="Zoom in">+</button><button type="button" aria-label="Zoom out">-</button></div>
<div class="credit"><a href="#leaflet">Leaflet</a> | © <a href="#osm">OpenStreetMap</a></div>
</template>

<script>
class TemplateElement extends HTMLElement{
  constructor(){super();this.attachShadow({mode:"open"}).append(document.getElementById(this.constructor.template).content.cloneNode(true));}
}
class SiteHeader extends TemplateElement{static template="t-header"}
class DoctorSearch extends TemplateElement{static template="t-search"}
class CardGrid extends TemplateElement{static template="t-grid"}
class DoctorCard extends TemplateElement{
  static template="t-card";
  connectedCallback(){
    const r=this.shadowRoot,put=(s,a)=>{r.querySelector(s).textContent=this.getAttribute(a)};
    put("h2","name");put("h3","specialty");put(".n","number");put(".e","email");
    if(this.hasAttribute("bookable")&&!r.querySelector("button")){
      const b=document.createElement("button");b.type="button";b.textContent="Login to book";r.querySelector(".foot").append(b);
    }
  }
}
/* Each entry: class, centre x, first baseline, lines of the label */
const NAMES=[
["city",1181,203,"North Vancouver"],["city",1134,310,"Vancouver"],["city",1299,341,"Burnaby"],["city",1507,269,"Coquitlam"],["city",1522,308,"Port Coquitlam"],["city",1733,384,"Maple Ridge"],["city",1442,434,"Surrey"],["city",1106,484,"Richmond"],["city",1199,624,"Delta"],["city",1666,590,"Langley City"],["city",2047,682,"Abbotsford"],["city",2488,494,"Chilliwack"],["city",173,483,"Nanaimo"],
["small",1664,559,"Langley Township"],["small",2101,490,"Mission"],["small",280,463,"Gabriola"],["small",20,327,"ntzville"],
["dark",836,92,"Bowen","Island"],["sea-name",914,101,"Charlotte","Channel"],["sea-name",1021,209,"Outer","Vancouver","Harbour"],["sea-name",1403,103,"Burrard","Inlet"],["sea-name",2083,151,"Stave","Lake"],
["nat",1289,98,"Reserve"],["nat",977,450,"Sturgeon","Bank Wildlife","Management","Area"],["nat",1001,620,"Roberts","Bank Wildlife","Management","Area"],["nat",1306,661,"Boundary","Bay Wildlife","Management","Area"],["nat",1774,185,"UBC Malcolm","Knapp","Research","Forest"],["nat",1986,233,"Stave West","Forest &","Recreation","Area"],["nat",2376,663,"Vedder","Mountain","Interpretative","Forest"]];
class ClinicMap extends TemplateElement{
  static template="t-map";
  connectedCallback(){
    const g=this.shadowRoot.querySelector("#names");
    if(g.childNodes.length)return;
    for(const [cls,x,y,...lines] of NAMES)lines.forEach((line,i)=>{
      const t=document.createElementNS("http://www.w3.org/2000/svg","text");
      t.setAttribute("class",cls);t.setAttribute("x",x);t.setAttribute("y",y+i*19);t.textContent=line;g.append(t);
    });
  }
}
customElements.define("site-header",SiteHeader);
customElements.define("clinic-map",ClinicMap);
customElements.define("doctor-search",DoctorSearch);
customElements.define("card-grid",CardGrid);
customElements.define("doctor-card",DoctorCard);
</script>
</body>
</html>
